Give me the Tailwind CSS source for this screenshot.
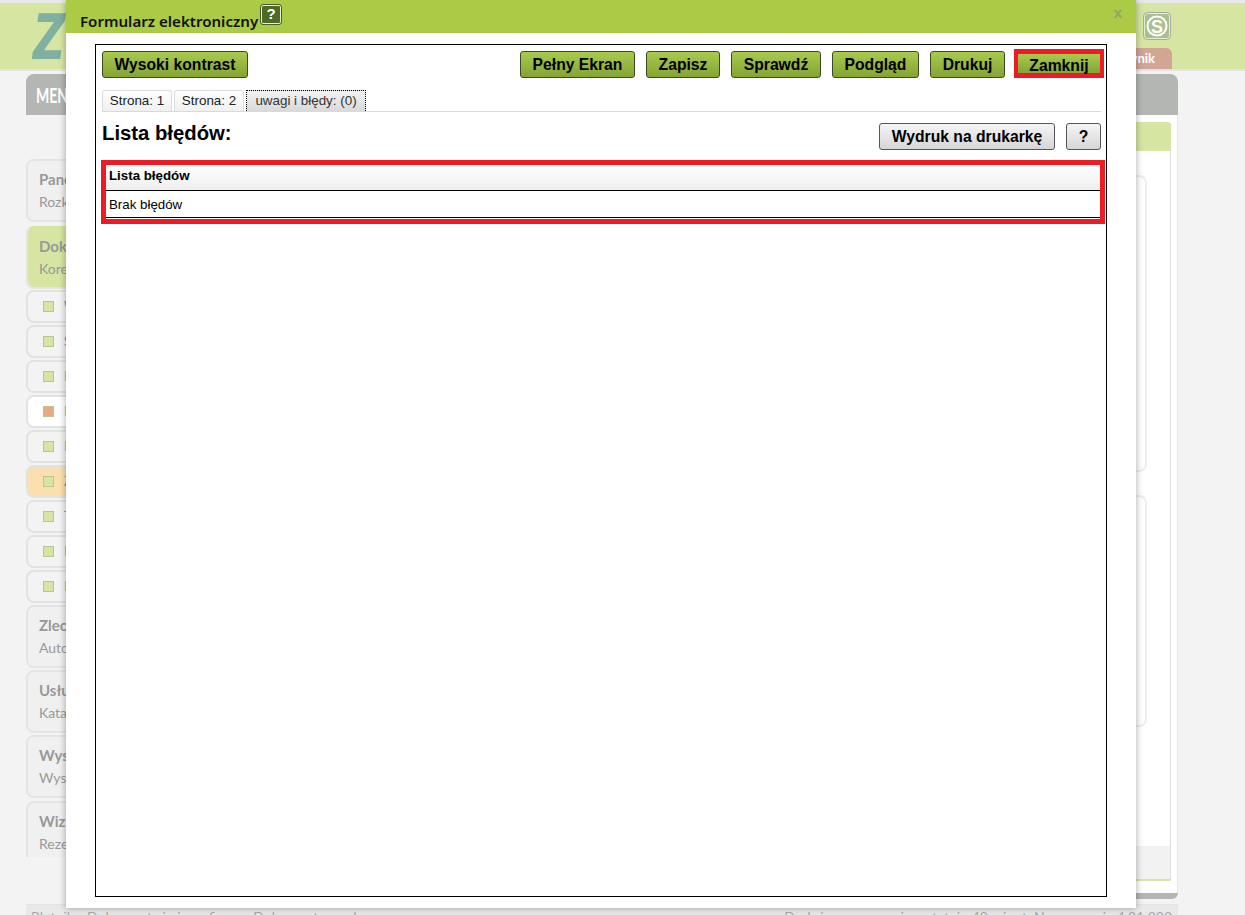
<!DOCTYPE html>
<html lang="pl">
<head>
    <meta charset="UTF-8">
    <meta name="viewport" content="width=device-width, initial-scale=1.0">
    <title>Formularz elektroniczny</title>
    <script src="https://cdn.jsdelivr.net/npm/@tailwindcss/browser@4"></script>
</head>
<body class="bg-[#f3f3f3]">
    <div class="relative h-[915px] overflow-hidden bg-[#f3f3f3] font-['Lato','Open_Sans',sans-serif]">

        <!-- strona pod oknem -->
        <div class="h-[3px] bg-[#e8e8e8]"></div>
        <header class="flex h-[66px] justify-between bg-[#d6e6a2] pl-[33px] pr-[73px]">
            <div class="pt-[12px]">
                <div class="origin-left scale-x-[0.72] text-[62px] leading-[45px] font-bold italic text-[#7fb0a2] font-['DejaVu_Sans',sans-serif]">ZO</div>
            </div>
            <div class="flex flex-col items-end pt-[9px]">
                <svg class="mr-px" width="28" height="28" viewBox="0 0 28 28">
                    <rect x="0.5" y="0.5" width="27" height="27" rx="4" fill="#a9bf8f" stroke="#a8aaa4"/>
                    <rect x="1.5" y="1.5" width="25" height="25" rx="3" fill="#a9bf8f" stroke="#e6efd6"/>
                    <circle cx="14" cy="14" r="9.5" fill="none" stroke="#fff" stroke-width="2"/>
                    <text x="14" y="20.5" text-anchor="middle" font-family="Liberation Sans" font-weight="700" font-size="18" fill="#fff">S</text>
                </svg>
                <div class="mt-[8px] flex h-[21px] w-[110px] items-center justify-end rounded-t-md bg-[#d2a595] pr-[17px] text-[13px] font-bold text-white">Pracownik</div>
            </div>
        </header>
        <div class="h-[2px] bg-[#e3e3e3]"></div>

        <main class="ml-[26px] mt-[3px] w-[1152px]">
            <div class="flex h-[41px] items-center rounded-t-lg bg-[#b4b6b4] pl-[10px]">
                <span class="origin-left scale-x-[0.7] text-[20px] font-bold text-white">MENU</span>
            </div>
            <div class="flex h-[784px]">
                <aside class="h-[742px] w-[240px] shrink-0 overflow-hidden pt-[44px] text-[#999]">
                    <div class="h-[63px] rounded-lg border-2 border-[#e4e4e4] bg-[#f0f0f0] pl-[11px] pt-[7px]">
                        <div class="text-[15px] font-bold">Panel</div>
                        <div class="text-[14px]">Rozkład zadań</div>
                    </div>
                    <div class="mt-[4px] h-[63px] rounded-lg border-2 border-[#e4e4e4] border-t-[#d6e6a2] bg-[#d6e6a2] pl-[11px] pt-[7px]">
                        <div class="text-[15px] font-bold">Dokumenty</div>
                        <div class="text-[14px]">Korespondencja</div>
                    </div>
                    <div class="mt-px flex flex-col gap-[2px] text-[13px]">
                        <div class="flex h-[33px] items-center rounded-lg border-2 border-[#e2e2e2] pl-[15px]"><span class="size-[11px] border border-[#b9c592] bg-[#d6e6a2]"></span><span class="ml-[10px] text-[#9a88a8]">Wnioski</span></div>
                        <div class="flex h-[33px] items-center rounded-lg border-2 border-[#e2e2e2] pl-[15px]"><span class="size-[11px] border border-[#b9c592] bg-[#d6e6a2]"></span><span class="ml-[10px] text-[#b08a9c]">Sprawy</span></div>
                        <div class="flex h-[33px] items-center rounded-lg border-2 border-[#e2e2e2] pl-[15px]"><span class="size-[11px] border border-[#b9c592] bg-[#d6e6a2]"></span><span class="ml-[10px] text-[#eab676]">Pisma</span></div>
                        <div class="flex h-[33px] items-center rounded-lg border-2 border-[#e2e2e2] bg-white pl-[15px]"><span class="size-[11px] border border-[#c9bd94] bg-[#e8a983]"></span><span class="ml-[10px] text-[#eab676]">Pisma</span></div>
                        <div class="flex h-[33px] items-center rounded-lg border-2 border-[#e2e2e2] pl-[15px]"><span class="size-[11px] border border-[#b9c592] bg-[#d6e6a2]"></span><span class="ml-[10px] text-[#eab676]">Pisma</span></div>
                        <div class="flex h-[33px] items-center rounded-lg border-2 border-[#e2e2e2] bg-[#fbdfae] pl-[15px]"><span class="size-[11px] border border-[#b9c592] bg-[#d6e6a2]"></span><span class="ml-[10px] text-[#a98a6c]">Zgłoszenia</span></div>
                        <div class="flex h-[33px] items-center rounded-lg border-2 border-[#e2e2e2] pl-[15px]"><span class="size-[11px] border border-[#b9c592] bg-[#d6e6a2]"></span><span class="ml-[10px] text-[#8f8f9c]">Teczki</span></div>
                        <div class="flex h-[33px] items-center rounded-lg border-2 border-[#e2e2e2] pl-[15px]"><span class="size-[11px] border border-[#b9c592] bg-[#d6e6a2]"></span><span class="ml-[10px] text-[#eab676]">Pisma</span></div>
                        <div class="flex h-[33px] items-center rounded-lg border-2 border-[#e2e2e2] pl-[15px]"><span class="size-[11px] border border-[#b9c592] bg-[#d6e6a2]"></span><span class="ml-[10px] text-[#eab676]">Pisma</span></div>
                    </div>
                    <div class="mt-[2px] h-[63px] rounded-lg border-2 border-[#e4e4e4] bg-[#f0f0f0] pl-[11px] pt-[7px]">
                        <div class="text-[15px] font-bold">Zlecenia</div>
                        <div class="text-[14px]">Automatyczne</div>
                    </div>
                    <div class="mt-[2px] h-[63px] rounded-lg border-2 border-[#e4e4e4] bg-[#f0f0f0] pl-[11px] pt-[7px]">
                        <div class="text-[15px] font-bold">Usługi</div>
                        <div class="text-[14px]">Katalog usług</div>
                    </div>
                    <div class="mt-[2px] h-[63px] rounded-lg border-2 border-[#e4e4e4] bg-[#f0f0f0] pl-[11px] pt-[7px]">
                        <div class="text-[15px] font-bold">Wysyłka</div>
                        <div class="text-[14px]">Wysyłka dokumentów</div>
                    </div>
                    <div class="mt-[3px] h-[63px] rounded-lg border-2 border-[#e4e4e4] bg-[#f0f0f0] pl-[11px] pt-[7px]">
                        <div class="text-[15px] font-bold">Wizyty</div>
                        <div class="text-[14px]">Rezerwacja wizyt</div>
                    </div>
                </aside>
                <div class="flex flex-1 flex-col">
                    <section class="flex-1 border-r border-[#e6e6e6] bg-white pr-[6px] pt-[7px]">
                        <div class="flex h-[759px] flex-col rounded-t border-r border-[#dddddd]">
                            <div class="-mr-px h-[29px] rounded-tr bg-[#d6e6a2]"></div>
                            <div class="mr-[23px] mt-[24px] h-[297px] rounded-lg border-2 border-[#eeeeee]"></div>
                            <div class="mr-[23px] mt-[23px] h-[232px] rounded-lg border-2 border-[#eeeeee]"></div>
                            <div class="mt-auto h-[33px] bg-[#f2f2f2]"></div>
                            <div class="-mr-px h-[2px] rounded-br bg-[#d6e6a2]"></div>
                        </div>
                    </section>
                    <div class="h-[6px] rounded-br-lg bg-[#b4b6b4]"></div>
                </div>
            </div>
            <footer class="mt-[5px] flex h-[12px] justify-between border-t border-[#e2e2e2] bg-[#e9e9e9] pl-[5px] pr-[6px] pt-[2px] text-[14px] leading-[20px] text-[#aaa]">
                <span>Płatnik » Dokumenty i pisma firmy » Dokumenty wysłane</span>
                <span>Dodać nową pozycję, ostatnio 48 minut. Nowa wersja 4.21.392</span>
            </footer>
        </main>

        <!-- okno formularza -->
        <div class="absolute left-[66px] top-0 flex h-[908px] w-[1070px] flex-col bg-white shadow-[0_0_7px_rgba(0,0,0,0.35)] font-['Liberation_Sans',sans-serif]">
            <div class="flex h-[33px] items-start justify-between bg-[#abca45] pl-[14px] pr-[14px]">
                <div class="flex items-start">
                    <span class="pt-[11px] text-[15.1px] leading-[20px] font-semibold text-[#111] font-['Noto_Sans',sans-serif]">Formularz elektroniczny</span>
                    <span class="ml-[3px] mt-[5px] flex h-[19px] w-[20px] items-center justify-center rounded-[2px] border border-[#e8eed8] bg-[#4d6a27] text-[15px] font-bold text-white outline outline-[#4d5a30]">?</span>
                </div>
                <span class="pt-[2px] text-[15px] font-bold text-[#8fa66a]">x</span>
            </div>

            <div class="ml-[29px] mt-[11px] h-[853px] w-[1012px] border border-black pl-[6px] pr-[5px]">
                <div class="mt-[4px] flex h-[29px] items-end gap-[11px]">
                    <button class="mr-auto h-[27px] w-[146px] rounded-[3px] border border-[#3c4a22] bg-gradient-to-b from-[#a8cb4e] to-[#84a434] text-[15.7px] font-bold text-black">Wysoki kontrast</button>
                    <button class="h-[27px] w-[115px] rounded-[3px] border border-[#3c4a22] bg-gradient-to-b from-[#a8cb4e] to-[#84a434] text-[15.7px] font-bold text-black">Pełny Ekran</button>
                    <button class="h-[27px] w-[74px] rounded-[3px] border border-[#3c4a22] bg-gradient-to-b from-[#a8cb4e] to-[#84a434] text-[15.7px] font-bold text-black">Zapisz</button>
                    <button class="h-[27px] w-[90px] rounded-[3px] border border-[#3c4a22] bg-gradient-to-b from-[#a8cb4e] to-[#84a434] text-[15.7px] font-bold text-black">Sprawdź</button>
                    <button class="h-[27px] w-[87px] rounded-[3px] border border-[#3c4a22] bg-gradient-to-b from-[#a8cb4e] to-[#84a434] text-[15.7px] font-bold text-black">Podgląd</button>
                    <button class="h-[27px] w-[75px] rounded-[3px] border border-[#3c4a22] bg-gradient-to-b from-[#a8cb4e] to-[#84a434] text-[15.7px] font-bold text-black">Drukuj</button>
                    <button class="-mr-[3px] -ml-[2px] h-[29px] w-[90px] border-[5px] border-x-4 border-[#ed1c24] bg-gradient-to-b from-[#a8cb4e] to-[#84a434] text-[15.7px] font-bold text-black">Zamknij</button>
                </div>

                <div class="mt-[12px] flex h-[22px] gap-[2px] border-b border-[#d9d9d9] text-[13.4px] text-[#222]">
                    <div class="flex h-[21px] w-[70px] items-center justify-center rounded-t-[3px] border border-b-0 border-[#dcdcdc] bg-gradient-to-b from-white to-[#f0f0f0]">Strona: 1</div>
                    <div class="flex h-[21px] w-[70px] items-center justify-center rounded-t-[3px] border border-b-0 border-[#dcdcdc] bg-gradient-to-b from-white to-[#f0f0f0]">Strona: 2</div>
                    <div class="flex h-[21px] w-[120px] items-center justify-center border border-b-0 border-dotted border-black bg-gradient-to-b from-[#f2f2f2] to-[#d9d9d9] text-[#333]">uwagi i błędy: (0)</div>
                </div>

                <div class="mt-[11px] flex h-[27px] items-start justify-between">
                    <h2 class="text-[20.3px] leading-[21px] font-bold text-black">Lista błędów:</h2>
                    <div class="flex gap-[11px]">
                        <button class="h-[27px] w-[176px] rounded-[3px] border border-[#555] bg-gradient-to-b from-[#f5f5f5] to-[#d6d6d6] text-[15.7px] font-bold text-black">Wydruk na drukarkę</button>
                        <button class="h-[27px] w-[35px] rounded-[3px] border border-[#555] bg-gradient-to-b from-[#f5f5f5] to-[#d6d6d6] text-[15.7px] font-bold text-black">?</button>
                    </div>
                </div>

                <div class="-ml-px mt-[10px] w-[1004px] border-[5px] border-[#ed1c24] bg-white text-[13.3px] text-black">
                    <div class="flex h-[26px] items-center border-b border-black bg-gradient-to-b from-white to-[#eeeeee] pb-[4px] pl-[3px] font-bold">Lista błędów</div>
                    <div class="flex h-[27px] items-center border-b border-black pl-[3px] pt-[2px]">Brak błędów</div>
                    <div class="h-px"></div>
                </div>
            </div>
        </div>
    </div>
</body>
</html>
